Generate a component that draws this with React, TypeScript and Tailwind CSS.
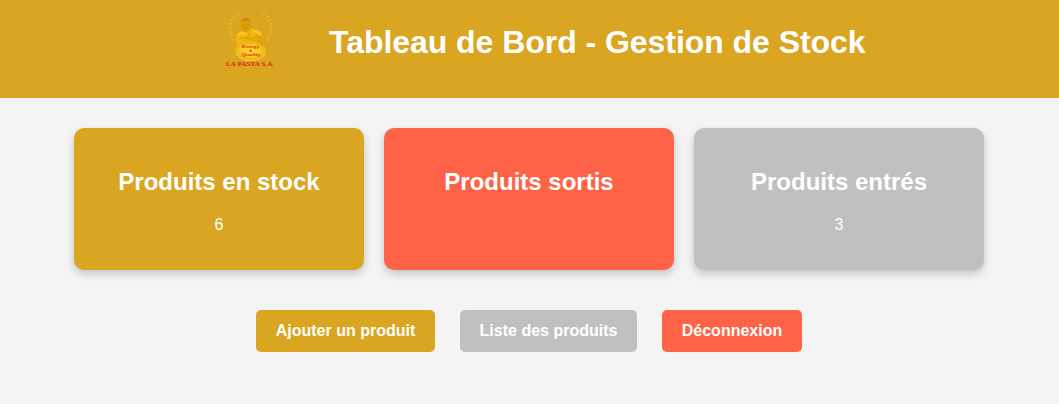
type CardProps = { title: string; value?: string; color: string };

const leaves = [
  [66, 27, -30], [57, 35, -40], [50, 45, -55], [46, 56, -70], [44, 68, -85],
  [45, 80, -100], [48, 92, -115], [54, 104, -130],
];

function Wreath() {
  return (
    <g fill="#e9b925">
      {leaves.map(([x, y, a]) => (
        <g key={y}>
          <ellipse cx={x} cy={y} rx="5" ry="2.6" transform={`rotate(${a + 75} ${x} ${y})`} />
          <ellipse cx={x + 5} cy={y + 4} rx="4" ry="2" fill="#e3b021" transform={`rotate(${a + 20} ${x + 5} ${y + 4})`} />
        </g>
      ))}
    </g>
  );
}

function Logo() {
  return (
    <svg viewBox="0 0 210 210" className="h-[70px] w-[70px] shrink-0" role="img" aria-label="La Pasta S.A.">
      <defs>
        <linearGradient id="body" x1="0" y1="0" x2="1" y2="1">
          <stop offset="0" stopColor="#f7c40c" />
          <stop offset="0.55" stopColor="#f0b40e" />
          <stop offset="1" stopColor="#d8980c" />
        </linearGradient>
        <radialGradient id="seal">
          <stop offset="0" stopColor="#fdd83a" />
          <stop offset="0.7" stopColor="#f9c620" />
          <stop offset="1" stopColor="#e9ac12" />
        </radialGradient>
      </defs>
      <Wreath />
      <g transform="translate(214 0) scale(-1 1)">
        <Wreath />
      </g>
      <path d="M64 120 C60 98 66 82 80 79 L104 73 C116 69 128 71 136 78 C146 88 146 104 142 120 Z" fill="url(#body)" />
      <path d="M77 53 C77 34 108 33 108 53 C110 67 103 82 92 82 C81 80 74 67 77 53 Z" fill="#dd9d0c" />
      <path d="M78 50 C81 35 105 35 108 50 C98 45 86 45 78 50 Z" fill="#cc890a" />
      <path d="M82 58 L90 58 M96 58 L103 57 M88 70 L98 70" stroke="#c5850a" strokeWidth="2" />
      <path d="M72 103 C84 92 100 105 112 100 C122 95 128 91 137 102 M104 82 L97 100" fill="none" stroke="#d8950b" strokeWidth="3" />
      <path d="M70 89 C77 82 87 84 92 89 M114 81 C124 77 134 83 137 91" fill="none" stroke="#fbd237" strokeWidth="4" />
      <ellipse cx="107" cy="138" rx="45" ry="27" fill="url(#seal)" stroke="#f3c12b" strokeWidth="2" />
      <path d="M64 144 C68 174 146 174 150 144" fill="none" stroke="#ffdc52" strokeWidth="2" />
      <g fill="#d93812" fontFamily="Liberation Sans, sans-serif" fontWeight="700" textAnchor="middle">
        <text x="107" y="130" fontSize="13" textLength="52" lengthAdjust="spacingAndGlyphs">Energy</text>
        <text x="107" y="141" fontSize="13">&amp;</text>
        <text x="108" y="152" fontSize="13" textLength="57" lengthAdjust="spacingAndGlyphs">Quality</text>
      </g>
      <text x="33" y="184" fontSize="21" fill="#dc2414" fontFamily="Liberation Serif, serif" fontWeight="700" textLength="145" lengthAdjust="spacingAndGlyphs">LA PASTA S.A.</text>
    </svg>
  );
}

function Card({ title, value, color }: CardProps) {
  return (
    <section className={`h-[142px] w-[290px] rounded-[10px] pt-10 text-center shadow-[0_4px_8px_rgba(0,0,0,0.2)] ${color}`}>
      <h2 className="text-2xl leading-[27px] font-bold">{title}</h2>
      <p className="mt-[21px] text-base leading-[18px]">{value}</p>
    </section>
  );
}

function Action({ label, color }: { label: string; color: string }) {
  return (
    <a href="#" className={`flex h-[42px] items-center justify-center rounded-[5px] text-base font-bold ${color}`}>
      {label}
    </a>
  );
}

export default function App() {
  return (
    <div className="min-h-screen bg-[#f4f4f4] font-['Liberation_Sans',Arial,sans-serif] text-white">
      <header className="flex h-[98px] items-start bg-[#daa520] pt-[5px] pl-[215px]">
        <Logo />
        <h1 className="mt-[19px] ml-11 text-[32px] leading-[37px] font-bold tracking-[-0.045px] whitespace-nowrap">Tableau de Bord - Gestion de Stock</h1>
      </header>
      <main>
        <div className="flex gap-5 pt-[30px] pl-[74px]">
          <Card title="Produits en stock" value="6" color="bg-[#daa520]" />
          <Card title="Produits sortis" color="bg-[#ff6347]" />
          <Card title="Produits entrés" value="3" color="bg-[#c0c0c0]" />
        </div>
        <nav className="flex gap-[25px] pt-10 pl-[256px]">
          <Action label="Ajouter un produit" color="w-[179px] bg-[#daa520]" />
          <Action label="Liste des produits" color="w-[177px] bg-[#c0c0c0]" />
          <Action label="Déconnexion" color="w-[140px] bg-[#ff6347]" />
        </nav>
      </main>
    </div>
  );
}
